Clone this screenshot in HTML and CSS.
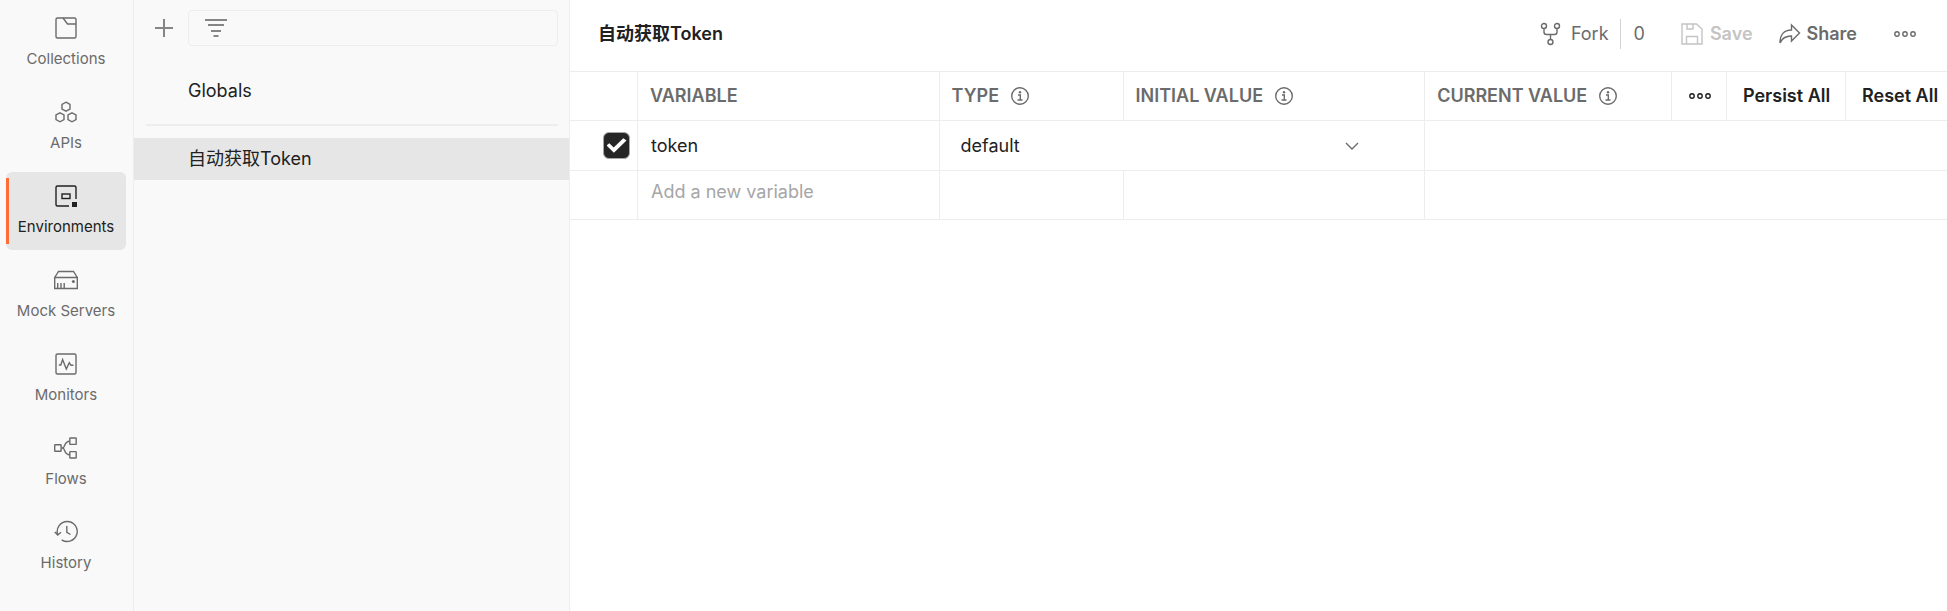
FILE: index.html
```html
<!DOCTYPE html>
<html lang="en">
<head>
  <meta charset="UTF-8" />
  <title>Environments</title>
  <link rel="stylesheet" href="styles.css">
</head>
<body>
  <div class="app">
    <nav class="sidebar">
      <a class="nav-item" href="#">
        <svg class="icon" viewBox="0 0 24 24"><rect x="2" y="2" width="20" height="20" rx="1.5"/><path d="M9 2l4.500 6H22"/></svg>
        <span>Collections</span>
      </a>
      <a class="nav-item" href="#">
        <svg class="icon" viewBox="0 0 24 24"><path d="M12 2.200l4 2.200v4.600l-4 2.200-4-2.200V4.400z"/><path d="M6 12.800l4 2.200v4.600l-4 2.200-4-2.200V15z"/><path d="M18 12.800l4 2.200v4.600l-4 2.200-4-2.200V15z"/></svg>
        <span>APIs</span>
      </a>
      <a class="nav-item active" href="#" aria-current="page">
        <svg class="icon" viewBox="0 0 24 24"><path d="M22 15V3.500A1.500 1.500 0 0 0 20.500 2h-17A1.500 1.500 0 0 0 2 3.500v17A1.500 1.500 0 0 0 3.500 22H15"/><rect x="8" y="10" width="8" height="4.500"/><rect class="solid" x="18" y="18" width="5" height="5"/></svg>
        <span>Environments</span>
      </a>
      <a class="nav-item" href="#">
        <svg class="icon" viewBox="0 0 24 24"><path d="M.7 9.500h22.600v11H.7zM.7 9.500l3.800-6h15l3.800 6M3.700 15v5.500M7 15v5.500M10.200 15v5.500"/><circle class="solid" cx="19.400" cy="13.400" r="1.500"/></svg>
        <span>Mock Servers</span>
      </a>
      <a class="nav-item" href="#">
        <svg class="icon" viewBox="0 0 24 24"><rect x="2" y="2" width="20" height="20" rx="1.500"/><path d="M4.800 13h2l1.800-5.500L12.300 17l3-6.300 1.700 2.600h2.500"/></svg>
        <span>Monitors</span>
      </a>
      <a class="nav-item" href="#">
        <svg class="icon" viewBox="0 0 24 24"><rect x=".7" y="8.800" width="6.400" height="6.400" rx=".5"/><rect x="15.800" y="2" width="6.400" height="6.400" rx=".5"/><rect x="15.800" y="15.600" width="6.400" height="6.400" rx=".5"/><path d="M7 12h1.500c3 0 1-6.800 7.300-6.800M8.500 12c3 0 1 6.800 7.300 6.800"/></svg>
        <span>Flows</span>
      </a>
      <a class="nav-item" href="#">
        <svg class="icon" viewBox="0 0 24 24"><path d="M3.700 14.500a10 10 0 1 1 4 5.300M.8 12l2.900 3 3.300-2.800M12.800 6v6.300l3.700 2.200"/></svg>
        <span>History</span>
      </a>
    </nav>

    <aside class="panel">
      <div class="toolbar">
        <button class="add-btn" aria-label="Add environment">
          <svg class="icon icon-thick" viewBox="0 0 24 24"><path d="M12 3v18M3 12h18"/></svg>
        </button>
        <label class="filter">
          <svg class="icon icon-thick" viewBox="0 0 24 24"><path d="M1 4h22M4 9h16M7 15h10M9.500 20h5"/></svg>
          <input type="text" aria-label="Filter environments" />
        </label>
      </div>
      <a class="env" href="#">Globals</a>
      <hr />
      <a class="env selected" href="#">自动获取Token</a>
    </aside>

    <main class="content">
      <header class="header">
        <h1>自动获取Token</h1>
        <button class="action fork">
          <svg class="icon" viewBox="0 0 24 24"><circle cx="5" cy="4" r="2.500"/><circle cx="18" cy="4" r="2.500"/><circle cx="11.500" cy="20" r="2.500"/><path d="M5 6.500V10q0 2.500 2.500 2.500h8q2.500 0 2.500-2.500V6.500M11.500 12.500v5"/></svg>
          Fork
        </button>
        <button class="action fork-count">0</button>
        <button class="action save" disabled>
          <svg class="icon" viewBox="0 0 24 24"><path d="M2 2h14.500L22 7v15H2zM7 2v5h6V2M6.500 22v-7.500h11V22"/></svg>
          Save
        </button>
        <button class="action share">
          <svg class="icon" viewBox="0 0 24 24"><path d="M14.500 3l8 8-8 8v-5C8.500 14 5 16 3 21 3 13 7 8 14.500 8z"/></svg>
          Share
        </button>
        <button class="action more" aria-label="More actions">
          <svg class="icon" viewBox="0 0 24 24"><circle cx="4" cy="12" r="2.200"/><circle cx="12" cy="12" r="2.200"/><circle cx="20" cy="12" r="2.200"/></svg>
        </button>
      </header>

      <table class="vars">
        <colgroup>
          <col class="col-check" />
          <col class="col-text" />
          <col class="col-type" />
          <col class="col-text" />
          <col />
          <col class="col-more" />
          <col class="col-persist" />
          <col class="col-reset" />
        </colgroup>
        <thead>
          <tr>
            <td></td>
            <th>VARIABLE</th>
            <th>TYPE
              <svg class="icon info" viewBox="0 0 20 20"><circle cx="10" cy="10" r="8.300"/><path d="M8 9h2.300v4.700M7.500 14h5"/><circle class="solid" cx="10" cy="6.200" r="1.200"/></svg>
            </th>
            <th>INITIAL VALUE
              <svg class="icon info" viewBox="0 0 20 20"><circle cx="10" cy="10" r="8.300"/><path d="M8 9h2.300v4.700M7.500 14h5"/><circle class="solid" cx="10" cy="6.200" r="1.200"/></svg>
            </th>
            <th>CURRENT VALUE
              <svg class="icon info" viewBox="0 0 20 20"><circle cx="10" cy="10" r="8.300"/><path d="M8 9h2.300v4.700M7.500 14h5"/><circle class="solid" cx="10" cy="6.200" r="1.200"/></svg>
            </th>
            <td class="cell-btn">
              <button aria-label="Column options">
                <svg class="icon" viewBox="0 0 24 24"><circle cx="4" cy="12" r="2.200"/><circle cx="12" cy="12" r="2.200"/><circle cx="20" cy="12" r="2.200"/></svg>
              </button>
            </td>
            <td class="cell-btn"><button>Persist All</button></td>
            <td class="cell-btn"><button>Reset All</button></td>
          </tr>
        </thead>
        <tbody>
          <tr>
            <td class="cell-check"><input type="checkbox" aria-label="Enable token" checked /></td>
            <td><input class="field" type="text" aria-label="Variable" value="token" /></td>
            <td colspan="2">
              <div class="select">
                <select aria-label="Type">
                  <option>default</option>
                  <option>secret</option>
                </select>
                <svg class="icon" viewBox="0 0 24 24"><path d="M6 9l6 6 6-6"/></svg>
              </div>
            </td>
            <td colspan="4"></td>
          </tr>
          <tr class="new-row">
            <td></td>
            <td><input class="field" type="text" aria-label="New variable" placeholder="Add a new variable" /></td>
            <td></td>
            <td></td>
            <td colspan="4"></td>
          </tr>
        </tbody>
      </table>
    </main>
  </div>
</body>
</html>
```

FILE: styles.css
```css
* {
  box-sizing: border-box;
}

body {
  margin: 0;
  font-family: Inter, "Noto Sans CJK SC", sans-serif;
  font-size: 18px;
  line-height: 24px;
  color: #212121;
  background: #fff;
}

a {
  color: inherit;
  text-decoration: none;
}

button,
input,
select {
  font: inherit;
  color: inherit;
  background: none;
  border: none;
  padding: 0;
}

button {
  cursor: pointer;
}

.app {
  display: flex;
  min-height: 100vh;
}

.icon {
  width: 24px;
  height: 24px;
  flex: none;
  fill: none;
  stroke: currentColor;
  stroke-width: 1.4;
}

.icon .solid {
  fill: currentColor;
  stroke: none;
}

.icon-thick {
  stroke: #858585;
  stroke-width: 2;
}

/* left navigation */
.sidebar {
  width: 134px;
  flex: none;
  display: flex;
  flex-direction: column;
  gap: 6px;
  padding: 4px 7px 4px 6px;
  background: #f9f9f9;
  border-right: 1px solid #ededed;
}

.nav-item {
  display: flex;
  flex-direction: column;
  align-items: center;
  gap: 9px;
  padding: 12px 0 13px;
  font-size: 15px;
  line-height: 20px;
  color: #6b6b6b;
  border-radius: 6px;
}

.nav-item.active {
  color: #212121;
  background: linear-gradient(#ff6c37, #ff6c37) left center / 3px 66px no-repeat #e6e6e6;
}

/* environment list */
.panel {
  width: 436px;
  flex: none;
  background: #f9f9f9;
  border-right: 1px solid #ededed;
}

.toolbar {
  display: flex;
  align-items: center;
  gap: 12px;
  padding: 10px 11px 24px 18px;
}

.add-btn {
  display: flex;
  width: 24px;
}

.filter {
  flex: 1;
  display: flex;
  align-items: center;
  height: 36px;
  padding: 0 15px;
  border: 1px solid #ededed;
  border-radius: 4px;
}

.filter input {
  flex: 1;
  min-width: 0;
  outline: none;
}

.env {
  display: block;
  padding: 6px 54px;
  line-height: 30px;
}

.panel hr {
  height: 2px;
  margin: 12px 11px 12px 12px;
  border: none;
  background: #ededed;
}

.env.selected {
  background: #e6e6e6;
}

/* main area */
.content {
  flex: 1;
  min-width: 0;
}

.header {
  display: flex;
  align-items: center;
  height: 71px;
  padding: 0 30px 3px 28px;
}

.header h1 {
  flex: 1;
  margin: 0;
  font-size: 18px;
  font-weight: 600;
}

.action {
  display: flex;
  align-items: center;
  gap: 8px;
  color: #6b6b6b;
  white-space: nowrap;
}

.fork-count {
  height: 30px;
  margin-left: 11px;
  padding: 0 35px 0 13px;
  border-left: 1px solid #d4d4d4;
}

.save,
.share {
  gap: 6px;
  font-weight: 600;
}

.save {
  color: #c4c4c4;
  cursor: default;
}

.share {
  margin: 0 36px 0 24px;
}

/* variables table */
.vars {
  width: 100%;
  table-layout: fixed;
  border-collapse: separate;
  border-spacing: 0;
  border-top: 1px solid #ededed;
}

.col-check { width: 68px; }
.col-text { width: 21.9%; }
.col-type { width: 184px; }
.col-more { width: 55px; }
.col-persist { width: 119px; }
.col-reset { width: 101px; }

.vars th,
.vars td {
  height: 49px;
  padding: 0 12px;
  text-align: left;
  border-right: 1px solid #ededed;
  border-bottom: 1px solid #ededed;
}

.vars tr > :last-child {
  border-right: none;
}

.vars th {
  font-weight: 600;
  color: #6b6b6b;
  white-space: nowrap;
}

.info {
  width: 20px;
  height: 20px;
  margin-left: 6px;
  vertical-align: -4px;
}

.vars .cell-btn {
  padding: 0 0 0 16px;
}

.cell-btn button {
  display: flex;
  font-weight: 600;
  white-space: nowrap;
}

.vars .cell-check {
  padding: 0 7px 0 0;
}

.cell-check input {
  appearance: none;
  display: grid;
  place-items: center;
  width: 27px;
  height: 27px;
  margin: 0 0 0 auto;
  border: 1px solid #a6a6a6;
  border-radius: 6px;
}

.cell-check input:checked {
  background: #262626;
}

.cell-check input:checked::before {
  content: "";
  width: 20px;
  height: 16px;
  background: #fff;
  clip-path: polygon(0 50%, 14% 36%, 36% 62%, 84% 4%, 100% 18%, 37% 96%);
}

.field {
  display: block;
  width: 100%;
  padding-left: 1px;
  outline: none;
}

.field::placeholder {
  color: #a6a6a6;
  opacity: 1;
}

.select {
  display: grid;
  align-items: center;
  padding: 0 48px 0 9px;
}

.select select,
.select svg {
  grid-area: 1 / 1;
}

.select select {
  appearance: none;
  outline: none;
}

.select svg {
  justify-self: end;
  color: #6b6b6b;
  pointer-events: none;
}

tbody .cell-check,
tbody .cell-check ~ td {
  height: 50px;
}

.vars .new-row td {
  padding-top: 9px;
  vertical-align: top;
}
```
